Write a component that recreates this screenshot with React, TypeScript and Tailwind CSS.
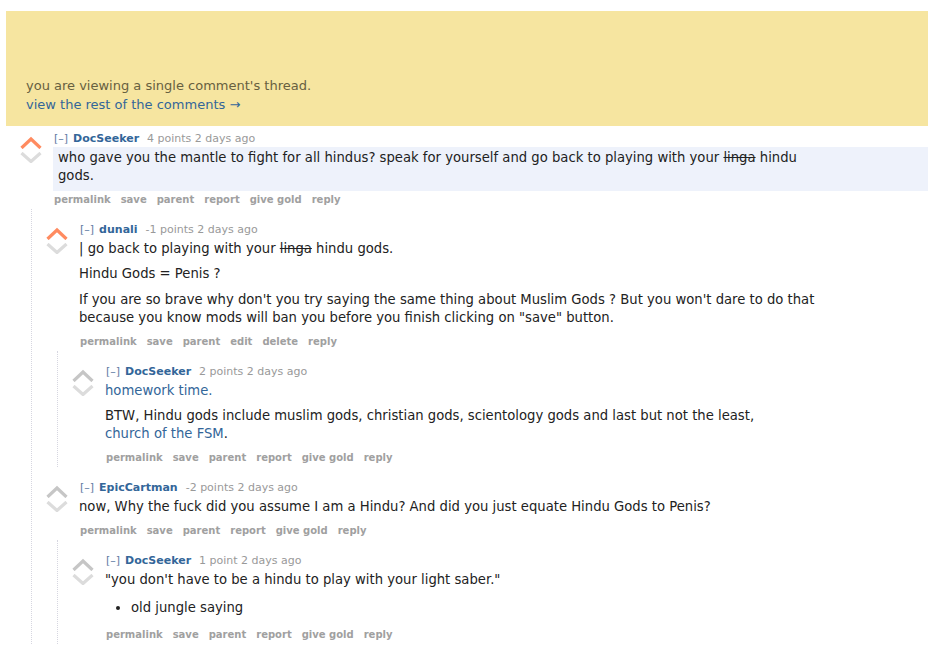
import React from 'react';

type CommentData = {
  author: string;
  score: string;
  upvoted?: boolean;
  highlight?: boolean;
  body: React.ReactNode;
  buttons: string[];
  replies?: CommentData[];
};

const normalButtons = ['permalink', 'save', 'parent', 'report', 'give gold', 'reply'];
const ownButtons = ['permalink', 'save', 'parent', 'edit', 'delete', 'reply'];

const thread: CommentData = {
  author: 'DocSeeker',
  score: '4 points',
  upvoted: true,
  highlight: true,
  buttons: normalButtons,
  body: (
    <p>
      who gave you the mantle to fight for all hindus? speak for yourself and go back to playing with your{' '}
      <del>linga</del> hindu gods.
    </p>
  ),
  replies: [
    {
      author: 'dunali',
      score: '-1 points',
      upvoted: true,
      buttons: ownButtons,
      body: (
        <>
          <p className="mb-[7px]">
            | go back to playing with your <del>linga</del> hindu gods.
          </p>
          <p className="mb-[8px]">Hindu Gods = Penis ?</p>
          <p>
            If you are so brave why don't you try saying the same thing about Muslim Gods ? But you won't dare to do
            that because you know mods will ban you before you finish clicking on "save" button.
          </p>
        </>
      ),
      replies: [
        {
          author: 'DocSeeker',
          score: '2 points',
          buttons: normalButtons,
          body: (
            <>
              <p className="mb-[7px]">
                <a className="text-[#369]">homework time.</a>
              </p>
              <p>
                BTW, Hindu gods include muslim gods, christian gods, scientology gods and last but not the least,
                <br />
                <a className="text-[#369]">church of the FSM</a>.
              </p>
            </>
          ),
        },
      ],
    },
    {
      author: 'EpicCartman',
      score: '-2 points',
      buttons: normalButtons,
      body: <p>now, Why the fuck did you assume I am a Hindu? And did you just equate Hindu Gods to Penis?</p>,
      replies: [
        {
          author: 'DocSeeker',
          score: '1 point',
          buttons: normalButtons,
          body: (
            <>
              <p>"you don't have to be a hindu to play with your light saber."</p>
              <ul className="mt-[10px] mb-[3px] pl-[26px] list-disc">
                <li>old jungle saying</li>
              </ul>
            </>
          ),
        },
      ],
    },
  ],
};

const Arrows: React.FC<{ upvoted?: boolean }> = ({ upvoted }) => (
  <div className="w-[22px] shrink-0 pt-[5px] flex flex-col gap-[3px]">
    <svg width="22" height="13" viewBox="0 0 22 13">
      <polyline points="1.5,12 11,3 20.5,12" fill="none" stroke={upvoted ? '#ff8b60' : '#c6c6c6'} strokeWidth="3.2" />
    </svg>
    <svg width="22" height="11" viewBox="0 0 22 11">
      <polyline points="1.5,1 11,9.5 20.5,1" fill="none" stroke="#dcdcdc" strokeWidth="3.2" />
    </svg>
  </div>
);

const Comment: React.FC<{ c: CommentData; top?: boolean }> = ({ c, top }) => (
  <div className={top ? 'pt-[5px]' : 'pt-[13px]'}>
    <div className="flex">
      <Arrows upvoted={c.upvoted} />
      <div className="ml-[11px] flex-1 min-w-0">
        <div className="h-[16px] leading-[16px] text-[11px] pl-[1px] flex gap-[6px] text-[#999]">
          <span className="text-[#5f7ba3]">[–]</span>
          <span className="font-bold text-[#369] -ml-[1px] mr-[2px]">{c.author}</span>
          <span>{c.score} 2 days ago</span>
        </div>
        <div
          className={
            'text-[13.2px] leading-[18px] text-[#222] pt-[2px] pb-[6px] ' +
            (c.highlight ? 'bg-[#eef2fb] px-[5px]' : '')
          }
        >
          <div className="max-w-[760px]">{c.body}</div>
        </div>
        <div className="h-[18px] leading-[18px] text-[10px] font-bold text-[#a0a0a0] pl-[1px] flex gap-[10px]">
          {c.buttons.map((b) => (
            <span key={b}>{b}</span>
          ))}
        </div>
      </div>
    </div>
    {c.replies && (
      <div className="ml-[11px] border-l border-dotted border-[#d6d6e0] pl-[14px]">
        {c.replies.map((r, i) => (
          <Comment key={i} c={r} />
        ))}
      </div>
    )}
  </div>
);

export default function App() {
  return (
    <div className="min-h-screen bg-white font-['DejaVu_Sans',Verdana,sans-serif] pt-[11px] pl-[6px] pr-[17px]">
      <div className="h-[115px] bg-[#f6e5a0] flex flex-col justify-end pb-[12px] pl-[20px] text-[13px] leading-[19px]">
        <div className="text-[#67603f]">you are viewing a single comment's thread.</div>
        <a className="text-[#369]">view the rest of the comments →</a>
      </div>
      <div className="pl-[14px]">
        <Comment c={thread} top />
      </div>
    </div>
  );
}
